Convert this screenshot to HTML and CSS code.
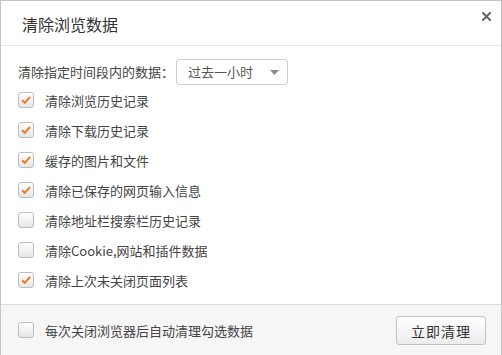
FILE: index.html
```html
<!DOCTYPE html>
<html>
  <head>
    <link rel="stylesheet" href="styles.css">
  </head>
  <body>
    <div class="dialog">
      <div class="dialog-header">
        <span class="dialog-title">清除浏览数据</span>
        <span class="close-btn">
          <svg width="9" height="9" viewBox="0 0 9 9"><path d="M1 1 L8 8 M8 1 L1 8" stroke="#666" stroke-width="2" stroke-linecap="square"/></svg>
        </span>
      </div>
      <div class="dialog-body">
        <div class="range-row">
          <span>清除指定时间段内的数据：</span>
          <div class="select">
            <span>过去一小时</span>
            <svg class="select-arrow" width="9" height="5" viewBox="0 0 9 5"><path d="M0 0 L9 0 L4.5 5 Z" fill="#8a8a8a"/></svg>
          </div>
        </div>
        <div class="check-row"><span class="checkbox checked"></span><span>清除浏览历史记录</span></div>
        <div class="check-row"><span class="checkbox checked"></span><span>清除下载历史记录</span></div>
        <div class="check-row"><span class="checkbox checked"></span><span>缓存的图片和文件</span></div>
        <div class="check-row"><span class="checkbox checked"></span><span>清除已保存的网页输入信息</span></div>
        <div class="check-row"><span class="checkbox"></span><span>清除地址栏搜索栏历史记录</span></div>
        <div class="check-row"><span class="checkbox"></span><span>清除Cookie,网站和插件数据</span></div>
        <div class="check-row"><span class="checkbox checked"></span><span>清除上次未关闭页面列表</span></div>
      </div>
      <div class="dialog-footer">
        <div class="check-row"><span class="checkbox"></span><span>每次关闭浏览器后自动清理勾选数据</span></div>
        <button class="clear-btn">立即清理</button>
      </div>
    </div>
  </body>
</html>
```

FILE: styles.css
```css
* {
  box-sizing: border-box;
}
body {
  margin: 0;
  font-family: "Noto Sans CJK SC", "Noto Sans", sans-serif;
  font-size: 13px;
  color: #444;
  background: #fff;
}
.dialog {
  width: 502px;
  height: 355px;
  border: 1px solid #c4c4c4;
  border-bottom: none;
  display: flex;
  flex-direction: column;
}
.dialog-header {
  height: 45px;
  border-bottom: 1px solid #e4e4e4;
  display: flex;
  align-items: flex-start;
  justify-content: space-between;
}
.dialog-title {
  font-size: 16px;
  color: #333;
  margin: 11px 0 0 21px;
  line-height: 24px;
}
.close-btn {
  margin: 11px 10px 0 0;
  display: flex;
}
.dialog-body {
  flex: 1;
  padding: 12px 17px 0 17px;
}
.range-row {
  display: flex;
  align-items: center;
  height: 27px;
}
.select {
  width: 112px;
  height: 26px;
  border: 1px solid #cfcfcf;
  border-radius: 3px;
  display: flex;
  align-items: center;
  justify-content: space-between;
  padding: 0 8px 0 11px;
  margin-left: 2px;
  color: #555;
}
.select-arrow {
  margin-top: 1px;
}
.check-row {
  display: flex;
  align-items: center;
  height: 30px;
}
.checkbox {
  width: 16px;
  height: 16px;
  border: 1px solid #bdbdbd;
  border-radius: 3px;
  background: linear-gradient(#ffffff, #e6e6e6);
  margin-right: 11px;
  flex-shrink: 0;
}
.checkbox.checked {
  background-image: url("data:image/svg+xml,%3Csvg xmlns='http://www.w3.org/2000/svg' width='14' height='14' viewBox='0 0 14 14'%3E%3Cpath d='M3 7.2 L5.8 9.8 L11 4' fill='none' stroke='%23ef7b2c' stroke-width='2'/%3E%3C/svg%3E"), linear-gradient(#ffffff, #e6e6e6);
  background-repeat: no-repeat;
  background-position: center;
}
.dialog-footer {
  height: 51px;
  border-top: 1px solid #dcdcdc;
  background: #f6f6f6;
  display: flex;
  align-items: center;
  justify-content: space-between;
  padding: 0 15px 0 17px;
}
.clear-btn {
  width: 90px;
  height: 29px;
  border: 1px solid #c2c2c2;
  border-radius: 3px;
  background: linear-gradient(#ffffff, #ececec);
  font-family: "Noto Sans CJK SC", sans-serif;
  font-size: 14px;
  color: #333;
  letter-spacing: 1px;
  padding: 0;
  margin-top: 1px;
}
```
